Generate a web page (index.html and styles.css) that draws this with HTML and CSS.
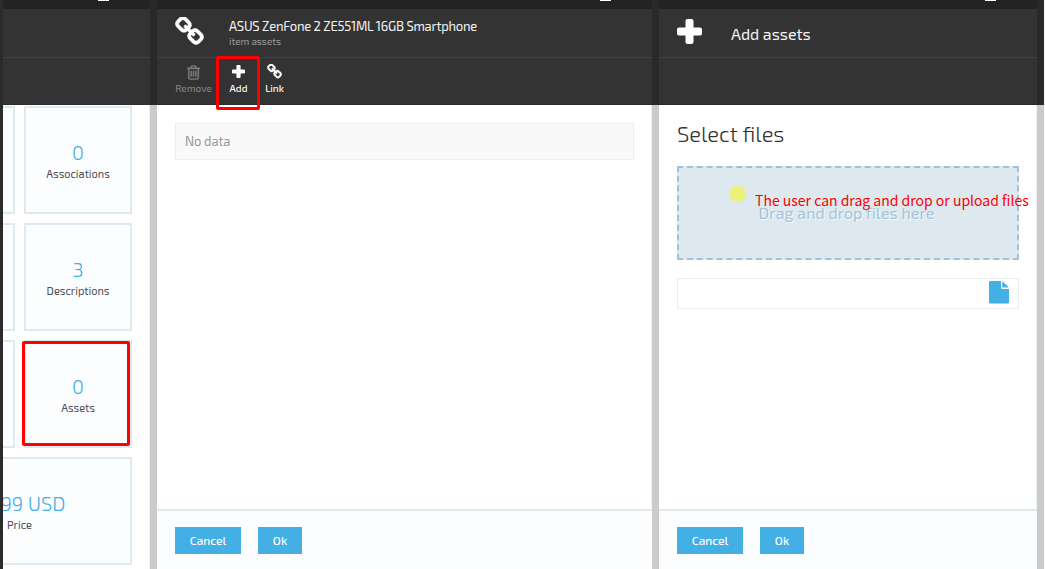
FILE: index.html
```
<!DOCTYPE html>
<html lang="en">
<head>
<meta charset="utf-8">
<title>Item assets</title>
<link rel="stylesheet" href="styles.css">
</head>
<body>
<svg class="defs" width="0" height="0">
  <symbol id="chain" viewBox="50 50 1692 1692"><path d="M1520 1216q0-40-28-68l-208-208q-28-28-68-28-42 0-72 32 3 3 19 18.500t21.500 21.500 15 19 13 25.500 3.500 27.500q0 40-28 68t-68 28q-15 0-27.500-3.500t-25.500-13-19-15-21.500-21.500-18.500-19q-33 31-33 73 0 40 28 68l206 207q27 27 68 27 40 0 68-26l147-146q28-28 28-67zm-703-705q0-40-28-68l-206-207q-28-28-68-28-39 0-68 27l-147 146q-28 28-28 67 0 40 28 68l208 208q27 27 68 27 42 0 72-31-3-3-19-18.500t-21.500-21.500-15-19-13-25.500-3.500-27.500q0-40 28-68t68-28q15 0 27.500 3.500t25.500 13 19 15 21.500 21.500 18.500 19q33-31 33-73zm895 705q0 120-85 203l-147 146q-83 83-203 83-121 0-204-85l-206-207q-83-83-83-203 0-123 88-209l-88-88q-86 88-208 88-120 0-204-84l-208-208q-84-84-84-204t85-203l147-146q83-83 203-83 121 0 204 85l206 207q83 83 83 203 0 123-88 209l88 88q86-88 208-88 120 0 204 84l208 208q84 84 84 204z"/></symbol>
  <symbol id="plus" viewBox="0 0 25 25"><path d="M10.500 0h4q2 0 2 2v6.500H23q2 0 2 2v4q0 2-2 2h-6.500V23q0 2-2 2h-4q-2 0-2-2v-6.500H2q-2 0-2-2v-4q0-2 2-2h6.500V2q0-2 2-2z"/></symbol>
  <symbol id="trash" viewBox="192 128 1408 1536"><path d="M704 736v576q0 14-9 23t-23 9h-64q-14 0-23-9t-9-23v-576q0-14 9-23t23-9h64q14 0 23 9t9 23zm256 0v576q0 14-9 23t-23 9h-64q-14 0-23-9t-9-23v-576q0-14 9-23t23-9h64q14 0 23 9t9 23zm256 0v576q0 14-9 23t-23 9h-64q-14 0-23-9t-9-23v-576q0-14 9-23t23-9h64q14 0 23 9t9 23zm128 724v-948h-896v948q0 22 7 40.500t14.500 27 10.500 8.500h832q3 0 10.500-8.500t14.500-27 7-40.500zm-672-1076h448l-48-117q-7-9-17-11h-317q-10 2-17 11zm928 32v64q0 14-9 23t-23 9h-96v948q0 83-47 143.500t-113 60.500h-832q-66 0-113-58.500t-47-141.500v-952h-96q-14 0-23-9t-9-23v-64q0-14 9-23t23-9h309l70-167q15-37 54-63t79-26h320q40 0 79 26t54 63l70 167h309q14 0 23 9t9 23z"/></symbol>
  <symbol id="file" viewBox="0 0 20 23"><path d="M1.200 0H12v6.500q0 1.500 1.500 1.500H20v13.300q0 1.200-1.200 1.200H1.200Q0 22.500 0 21.300V1.200Q0 0 1.200 0zM13.300.3q.5.200.9.600l4.800 4.700q.4.400.6 1h-6.300z"/></symbol>
</svg>
<div class="app">
  <div class="edge"></div>
  <section class="panel panel-item">
    <div class="topbar"><i class="min"></i></div>
    <div class="title"></div>
    <div class="tools"></div>
    <div class="tiles">
      <div class="tile"></div>
      <div class="tile"><b class="num">0</b><span class="cap">Associations</span></div>
      <div class="tile"></div>
      <div class="tile"><b class="num">3</b><span class="cap">Descriptions</span></div>
      <div class="tile"></div>
      <div class="tile"><b class="num">0</b><span class="cap">Assets</span></div>
      <div class="tile wide"><b class="num price">99 USD</b><span class="cap">Price</span></div>
    </div>
  </section>
  <div class="gutter"></div>
  <section class="panel panel-assets">
    <div class="topbar"><i class="min"></i></div>
    <div class="title">
      <svg class="chain-big"><use href="#chain"/></svg>
      <div class="heads"><span class="name">ASUS ZenFone 2 ZE551ML 16GB Smartphone</span><span class="sub">item assets</span></div>
    </div>
    <div class="tools">
      <div class="tool off"><svg class="i-trash"><use href="#trash"/></svg><span>Remove</span></div>
      <div class="tool"><svg class="i-plus"><use href="#plus"/></svg><span>Add</span></div>
      <div class="tool"><svg class="i-link"><use href="#chain"/></svg><span>Link</span></div>
    </div>
    <div class="content"><div class="empty"><span>No data</span></div></div>
    <div class="footer"><button class="btn cancel">Cancel</button><button class="btn ok">Ok</button></div>
  </section>
  <div class="gutter"></div>
  <section class="panel panel-add">
    <div class="topbar"><i class="min"></i></div>
    <div class="title"><svg class="plus-big"><use href="#plus"/></svg><span class="head">Add assets</span></div>
    <div class="tools"></div>
    <div class="content">
      <h2>Select files</h2>
      <div class="drop"><span>Drag and drop files here</span></div>
      <div class="field"><svg class="i-file"><use href="#file"/></svg></div>
    </div>
    <div class="footer"><button class="btn cancel">Cancel</button><button class="btn ok">Ok</button></div>
  </section>
  <div class="gutter"></div>
  <div class="mark mark-add"></div>
  <div class="mark mark-assets"></div>
  <div class="dot"></div>
  <div class="note">The user can drag and drop or upload files</div>
</div>
</body>
</html>
```
FILE: styles.css
```
* { box-sizing: border-box; }
body { margin: 0; background: #f2f7f8; font-family: "Exo 2", Roboto, "Open Sans", sans-serif; }
svg { display: block; fill: currentColor; flex: none; }
.defs { position: absolute; }
.app { position: relative; display: flex; width: 1045px; height: 569px; overflow: hidden; white-space: nowrap; }
.edge { width: 3px; background: #2b2b2b; }
.gutter { width: 7px; background: linear-gradient(#292929 105px, #cbcbcb 105px); }
.panel { display: flex; flex-direction: column; background: linear-gradient(#f0f3f4, #f0f3f4) right / 1px 100% no-repeat #fff; overflow: hidden; }
.panel-item { width: 147px; }
.panel-assets { width: 495px; }
.panel-add { width: 378px; }
.topbar, .title, .tools, .footer { flex: none; }
.topbar { height: 9px; background: #232323; display: flex; justify-content: flex-end; }
.min { width: 11px; height: 1px; background: #fff; margin-right: 41px; }
.title { height: 49px; background: #333; border-bottom: 1px solid #414141; color: #f4f4f4; display: flex; padding: 8px 18px 0; }
.tools { height: 47px; background: #333; color: #fff; border-bottom: 1px solid #2b2b2b; display: flex; padding: 6px 0 0 18px; }

.tiles { display: grid; grid-template-columns: 108px 108px; grid-auto-rows: 108px; gap: 9px; margin: 1px 18px 0 -96px; }
.tile { border: 2px solid #dfeaf0; background: #fcfdff; display: flex; flex-direction: column; align-items: center; padding-top: 32px; }
.wide { grid-column: span 2; }
.num { font-weight: 300; font-size: 20px; line-height: 24px; color: #44afe5; }
.price { margin-left: 27px; }
.cap { font-size: 11px; line-height: 16px; margin-top: 2px; color: #4e4f52; }

.chain-big { width: 29px; height: 29px; stroke: #fff; stroke-width: 36; }
.title svg { color: #fff; }
.heads { display: flex; flex-direction: column; margin-left: 25px; }
.name { font-size: 13px; line-height: 18px; letter-spacing: -0.24px; }
.sub { font-size: 10px; line-height: 12px; color: #999; letter-spacing: -.05px; }
.plus-big { width: 25px; height: 25px; margin-top: 2px; }
.head { font-size: 16px; line-height: 20px; margin: 7px 0 0 29px; }

.tool { display: flex; flex-direction: column; align-items: center; width: 37px; font-size: 10px; font-weight: 500; }
.tool + .tool { margin-left: 8px; }
.tool + .tool + .tool { margin-left: -1px; }
.tool span { margin-top: auto; margin-bottom: 9px; line-height: 14px; }
.off { color: #808080; }
.i-trash { width: 13px; height: 15px; margin-top: 1px; stroke: #808080; stroke-width: 30; }
.i-plus { width: 13px; height: 13px; margin-top: 1px; }
.i-link { width: 15px; height: 15px; stroke: #fff; stroke-width: 50; }

.content { flex: 1; padding: 16px 18px 0 18px; }
.empty { height: 37px; margin-top: 2px; border: 1px solid #eee; background: #f9f9f9; padding: 0 9px; font-size: 13px; line-height: 35px; color: #999; letter-spacing: -.12px; }
.footer { height: 60px; border-top: 2px solid #dfeaf0; background: #fcfdff; display: flex; gap: 17px; padding: 16px 18px; }
.btn { height: 27px; border: 0; padding: 0 0 2px; background: #44afe5; color: #fff; font: 500 12px "Exo 2", Roboto, "Open Sans", sans-serif; }
.cancel { width: 66px; }
.ok { width: 44px; }
h2 { margin: 0; font-size: 22px; font-weight: 300; line-height: 24px; color: #333; }
.drop { height: 94px; margin-top: 21px; border: 2px dashed #a1c1d5; background: #dee9ef; display: flex; justify-content: center; align-items: center; padding: 0 3px 2px 0; font-size: 16px; letter-spacing: .08px; color: #a6c4d8; text-shadow: 1px 1px 0 #f2f8fb; }
.field { height: 31px; margin-top: 18px; border: 1px solid #e7eff3; display: flex; justify-content: flex-end; padding: 2px 9px 0 0; }
.i-file { width: 20px; height: 23px; color: #44afe5; }

.mark { position: absolute; border: 3px solid #f00; border-radius: 2px; }
.mark-add { left: 216px; top: 56px; width: 44px; height: 54px; }
.mark-assets { left: 22px; top: 341px; width: 108px; height: 105px; }
.dot { position: absolute; left: 729px; top: 186px; width: 17px; height: 16px; border-radius: 50%; background: #eef179; }
.note { position: absolute; left: 755px; top: 190px; font: 14px/20px "Noto Sans CJK SC", "Noto Sans", sans-serif; color: #f00; }
```
